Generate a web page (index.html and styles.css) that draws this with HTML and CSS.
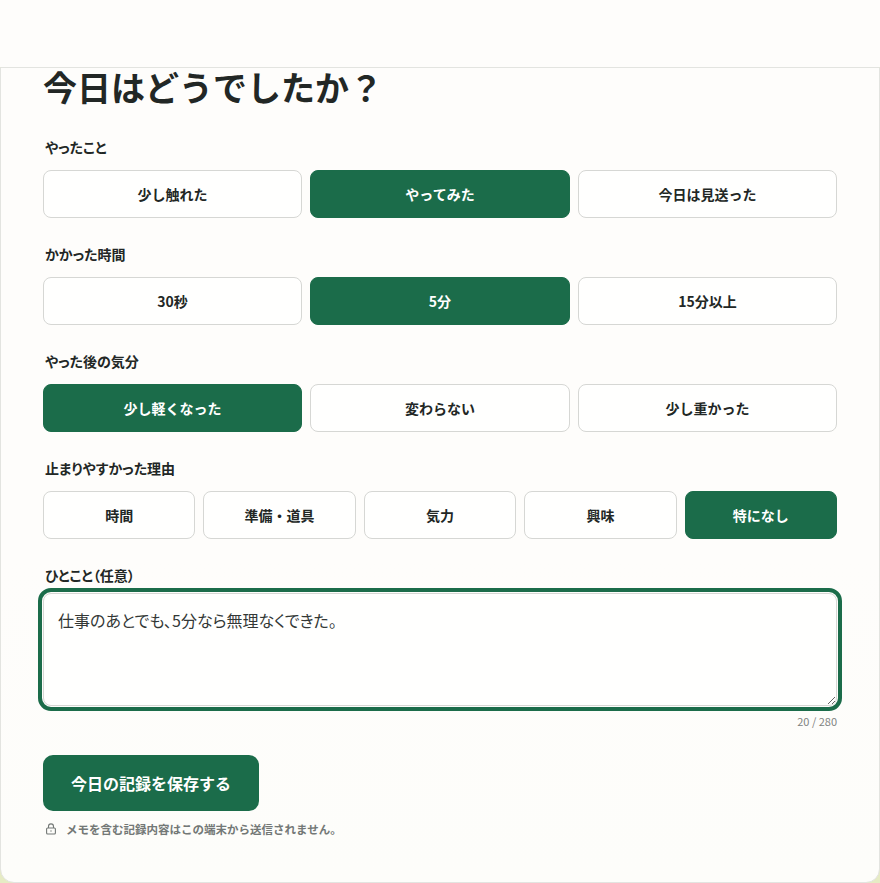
FILE: index.html
```html
<!DOCTYPE html>
<html lang="ja">
<head>
<meta charset="utf-8">
<title>今日はどうでしたか？</title>
<link rel="stylesheet" href="styles.css">
</head>
<body>
<header class="topbar"></header>
<main class="card">
  <h1 class="title">今日はどうでしたか？</h1>
  <section class="group">
    <div class="label">やったこと</div>
    <div class="options three">
      <button class="opt">少し触れた</button>
      <button class="opt on">やってみた</button>
      <button class="opt">今日は見送った</button>
    </div>
  </section>
  <section class="group">
    <div class="label">かかった時間</div>
    <div class="options three">
      <button class="opt">30秒</button>
      <button class="opt on">5分</button>
      <button class="opt">15分以上</button>
    </div>
  </section>
  <section class="group">
    <div class="label">やった後の気分</div>
    <div class="options three">
      <button class="opt on">少し軽くなった</button>
      <button class="opt">変わらない</button>
      <button class="opt">少し重かった</button>
    </div>
  </section>
  <section class="group">
    <div class="label">止まりやすかった理由</div>
    <div class="options five">
      <button class="opt">時間</button>
      <button class="opt">準備・道具</button>
      <button class="opt">気力</button>
      <button class="opt">興味</button>
      <button class="opt on">特になし</button>
    </div>
  </section>
  <section class="memo">
    <div class="label">ひとこと（任意）</div>
    <textarea class="text">仕事のあとでも、5分なら無理なくできた。</textarea>
    <div class="count">20 / 280</div>
  </section>
  <button class="save">今日の記録を保存する</button>
  <p class="note">
    <svg class="lock" width="12" height="12" viewBox="0 0 12 12" fill="none" stroke="currentColor" stroke-width="1.1"><rect x="1.6" y="5" width="8.8" height="6" rx="1"/><path d="M3.5 5V3.4a2.5 2.5 0 0 1 5 0V5"/><circle cx="6" cy="8" r=".7" fill="currentColor" stroke="none"/></svg>
    <span>メモを含む記録内容はこの端末から送信されません。</span>
  </p>
</main>
</body>
</html>
```
FILE: styles.css
```css
* { box-sizing: border-box; }
html, body { margin: 0; height: 883px; overflow: hidden; }
body {
  background: #e6ebc4;
  color: #222725;
  font-family: "Noto Sans CJK JP", "Noto Sans", sans-serif;
}
.topbar { height: 67px; background: #fefdfb; }
.card {
  height: 816px;
  border: 1px solid #e3e4e0;
  border-radius: 0 0 14px 14px;
  background: linear-gradient(180deg, #fefdfb 0%, #fefdfb 60%, #fdfdfa 100%);
  padding: 0 42px;
}
.title {
  margin: 0;
  height: 39px;
  font-size: 34px;
  line-height: 37px;
  font-weight: 700;
  color: #222725;
}
.group { height: 107px; }
.title + .group { margin-top: 30px; }
.label {
  height: 22px;
  margin: 0 0 11px 2px;
  font-size: 14px;
  line-height: 20px;
  font-weight: 700;
  font-feature-settings: "palt";
}
.options { display: grid; gap: 8px; }
.three { grid-template-columns: 259fr 260fr 259fr; }
.five { grid-template-columns: repeat(5, 1fr); }
.opt {
  height: 48px;
  border: 1px solid #d6d7d4;
  border-radius: 8px;
  background: #fffffe;
  color: #222725;
  font: 700 14px "Noto Sans CJK JP", sans-serif;
}
.opt.on { background: #1b6c4a; border-color: #1b6c4a; color: #fff; }
.memo .label { margin-bottom: 6px; }
.text {
  display: block;
  width: 794px;
  height: 113px;
  padding: 14px;
  border: 1px solid #d6d7d4;
  border-radius: 8px;
  background: #fffffe;
  color: #333836;
  font: 400 16px/24px "Noto Sans CJK JP", sans-serif;
  font-feature-settings: "palt";
  outline: 4px solid #1b6c4a;
  outline-offset: 1px;
}
.count {
  width: 794px;
  margin-top: 8px;
  text-align: right;
  font-size: 11px;
  line-height: 14px;
  color: #808280;
}
.save {
  display: block;
  width: 216px;
  height: 56px;
  margin-top: 27px;
  border: 0;
  border-radius: 10px;
  background: #1b6c4a;
  color: #fff;
  font: 700 16px "Noto Sans CJK JP", sans-serif;
}
.note {
  display: flex;
  align-items: center;
  gap: 9px;
  margin: 10px 0 0 2px;
  font-size: 11.5px;
  line-height: 16px;
  font-weight: 700;
  color: #737876;
}
.lock { flex: none; }
```
